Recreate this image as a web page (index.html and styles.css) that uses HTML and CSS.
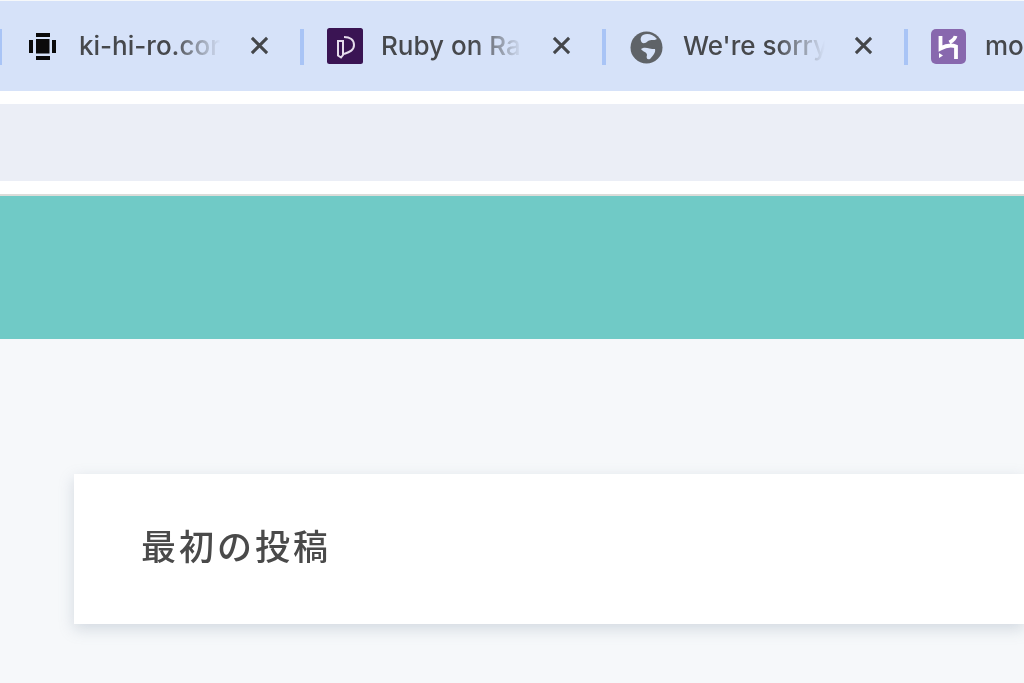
FILE: index.html
```html
<!DOCTYPE html>
<html lang="ja">
<head>
<meta charset="utf-8">
<title>最初の投稿</title>
<link rel="stylesheet" href="styles.css">
</head>
<body>
<div class="tabstrip">
  <div class="tab">
    <svg class="icon" viewBox="0 0 36 36"><g fill="#0b0b0b"><rect x="11" y="5" width="14" height="4"/><rect x="11" y="28" width="14" height="4"/><rect x="4" y="12" width="4" height="13"/><rect x="27" y="12" width="4" height="13"/><rect x="11" y="11" width="13.500" height="14.500"/></g></svg>
    <span class="title">ki-hi-ro.cor</span>
    <svg class="close" viewBox="0 0 20 20"><path d="M2 2 18 18M18 2 2 18"/></svg>
  </div>
  <div class="tab">
    <svg class="icon" viewBox="0 0 36 36"><rect width="36" height="36" rx="2.500" fill="#3a1453"/><path d="M11 13h5v14l-2 2.500-3-2zM17 9c6 0 10 3 10 8 0 5-4 7-10 9" fill="none" stroke="#e6dcec" stroke-width="2"/></svg>
    <span class="title">Ruby on Ra</span>
    <svg class="close" viewBox="0 0 20 20"><path d="M2 2 18 18M18 2 2 18"/></svg>
  </div>
  <div class="tab">
    <svg class="icon" viewBox="0 0 36 36"><circle cx="17.500" cy="19.500" r="16" fill="#5f6368"/><path d="M14 7C18 5 24 6 28 11 25 13 22 11 19 13 16 16 13 16 12 13 11 11 12 8 14 7zM12 21C16 18 20 21 26 21 27 24 24 28 21 31 18 32 17 30 18 27 18 24 14 24 12 21z" fill="#d6e2f9"/></svg>
    <span class="title">We're sorry</span>
    <svg class="close" viewBox="0 0 20 20"><path d="M2 2 18 18M18 2 2 18"/></svg>
  </div>
  <div class="tab">
    <svg class="icon" viewBox="0 0 36 36"><rect x="0" y="1" width="35" height="35" rx="5" fill="#8868ae"/><path d="M9.500 8V20.500C14 18 20 16.500 25 18.500V31M24.500 8C24 11 21 13 18.500 14.500" fill="none" stroke="#fff" stroke-width="3.800"/><path d="M8 25l4 2.500-4 2.500z" fill="#fff"/></svg>
    <span class="title">mo</span>
  </div>
</div>
<div class="gap"></div>
<div class="toolbar"></div>
<div class="gap gap-bottom"></div>
<div class="hero"></div>
<main class="content">
  <div class="card"><h1 class="post-title">最初の投稿</h1></div>
</main>
</body>
</html>
```

FILE: styles.css
```css
* { box-sizing: border-box; }
html, body { margin: 0; height: 100%; }
body {
  width: 1024px;
  height: 683px;
  overflow: hidden;
  background: #f6f8fa;
  font-family: "Inter", "Noto Sans CJK JP", sans-serif;
  display: flex;
  flex-direction: column;
}
.tabstrip {
  flex: none;
  height: 90px;
  margin-top: 1px;
  background: #d6e2f9;
  display: flex;
  overflow: hidden;
  filter: blur(0.7px);
}
.tab {
  flex: none;
  width: 302px;
  height: 90px;
  padding-bottom: 1px;
  display: flex;
  align-items: center;
  position: relative;
  padding-left: 25px;
}
.tab::before {
  content: "";
  position: absolute;
  left: -2px;
  top: 28px;
  width: 4px;
  height: 36px;
  background: #a9c4f6;
}
.icon { flex: none; width: 36px; height: 36px; margin-right: 18px; }
.title {
  flex: none;
  width: 142px;
  white-space: nowrap;
  font-size: 26px;
  font-weight: 450;
  color: #46484c;
  -webkit-mask-image: linear-gradient(to right, #000 66%, transparent 100%);
  mask-image: linear-gradient(to right, #000 66%, transparent 100%);
}
.close {
  flex: none;
  width: 19px;
  height: 19px;
  margin-left: 29px;
  fill: none;
  stroke: #44464a;
  stroke-width: 3.200;
}
.gap { flex: none; height: 13px; background: #fff; }
.toolbar { flex: none; height: 77px; background: #ebeef6; }
.gap-bottom { height: 15px; border-bottom: 2px solid #dcdcd9; }
.hero { flex: none; height: 143px; background: #70cac6; }
.content { flex: 1; padding: 135px 0 0 74px; }
.card {
  height: 150px;
  background: #fff;
  box-shadow: 0 5px 14px rgba(130, 145, 165, 0.3);
  padding: 0 0 10px 67px;
  display: flex;
  align-items: center;
}
.post-title {
  margin: 0;
  font-family: "Noto Sans CJK JP", sans-serif;
  font-weight: 500;
  font-size: 35px;
  letter-spacing: 3px;
  color: #4a4a4a;
  filter: blur(0.5px);
}
```
